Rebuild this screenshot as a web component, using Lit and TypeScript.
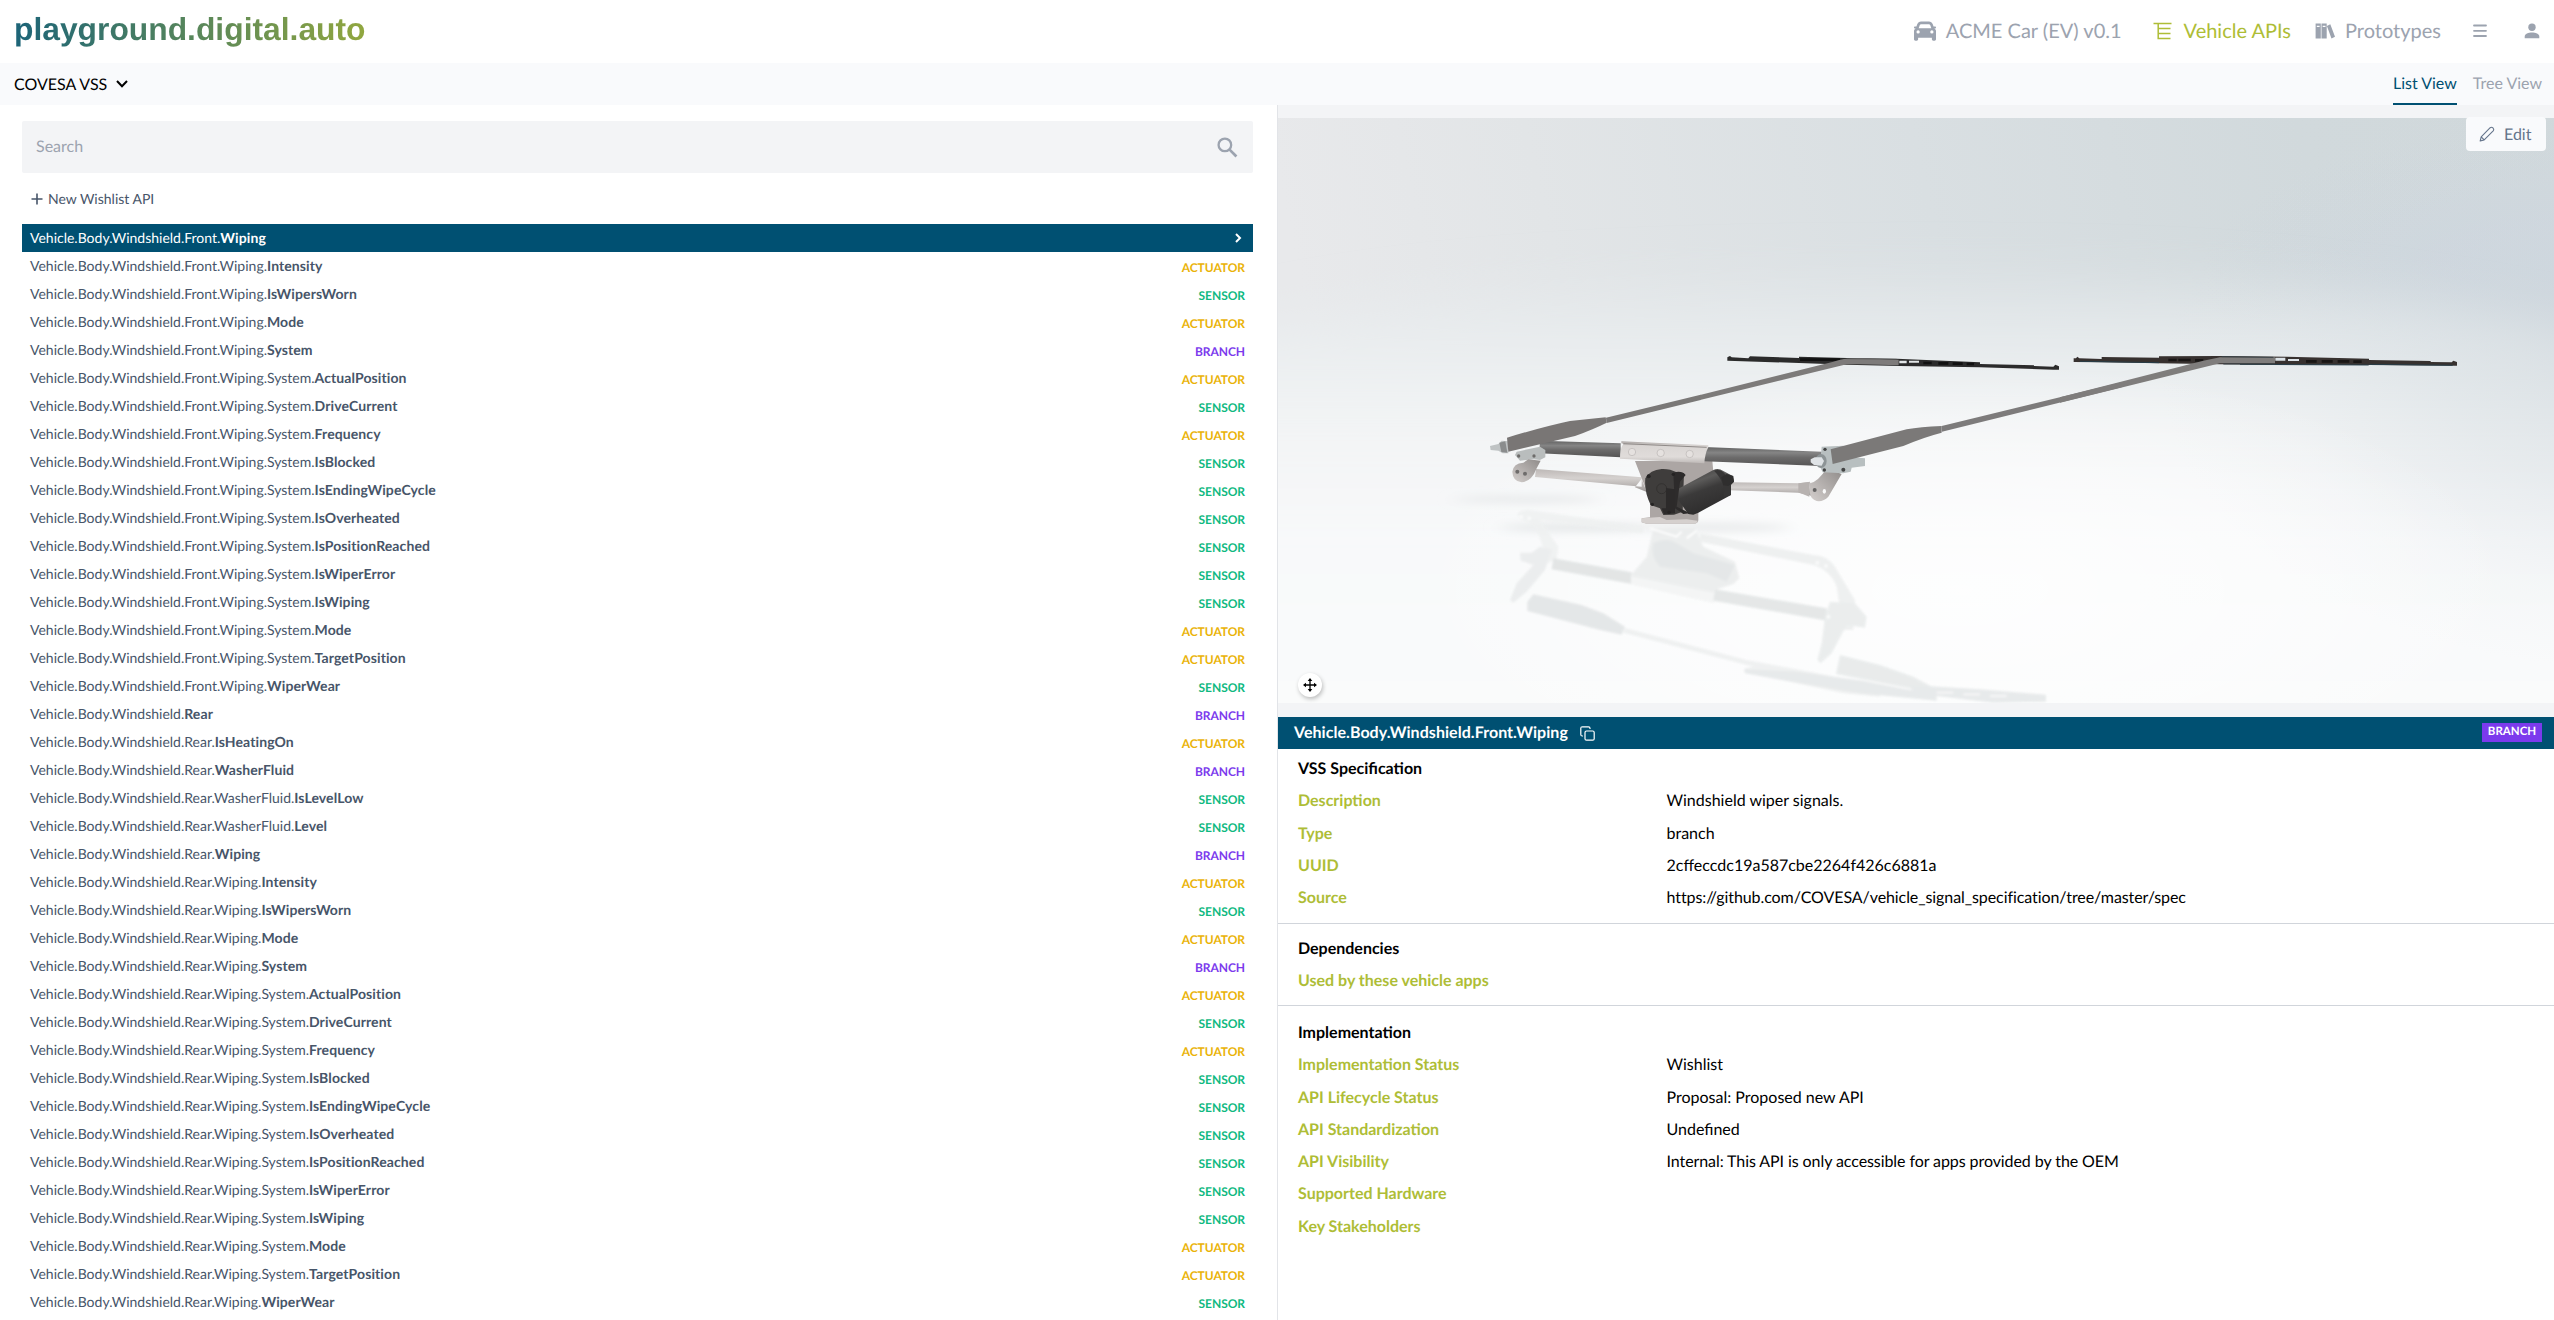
import { LitElement, html, css } from "lit";
import { customElement } from "lit/decorators.js";

type Kind = "BRANCH" | "ACTUATOR" | "SENSOR";

const F = "Vehicle.Body.Windshield.Front.Wiping.";
const R = "Vehicle.Body.Windshield.Rear.";
const A: Kind = "ACTUATOR", S: Kind = "SENSOR", B: Kind = "BRANCH";

const wiping = (p: string): [string, string, Kind][] => [
  [p, "Intensity", A], [p, "IsWipersWorn", S], [p, "Mode", A], [p, "System", B],
  [p + "System.", "ActualPosition", A], [p + "System.", "DriveCurrent", S], [p + "System.", "Frequency", A],
  [p + "System.", "IsBlocked", S], [p + "System.", "IsEndingWipeCycle", S], [p + "System.", "IsOverheated", S],
  [p + "System.", "IsPositionReached", S], [p + "System.", "IsWiperError", S], [p + "System.", "IsWiping", S],
  [p + "System.", "Mode", A], [p + "System.", "TargetPosition", A], [p, "WiperWear", S],
];

const ROWS: [string, string, Kind][] = [
  ["Vehicle.Body.Windshield.Front.", "Wiping", B],
  ...wiping(F),
  ["Vehicle.Body.Windshield.", "Rear", B],
  [R, "IsHeatingOn", A], [R, "WasherFluid", B],
  [R + "WasherFluid.", "IsLevelLow", S], [R + "WasherFluid.", "Level", S],
  [R, "Wiping", B],
  ...wiping(R + "Wiping."),
];

@customElement("wiper-scene")
export class WiperScene extends LitElement {
  static styles = css`
    :host { display: block; }
    svg { display: block; width: 100%; height: 100%; }
  `;
  render() {
    return html`<svg viewBox="1278 118 1276 585" preserveAspectRatio="none">
      <defs>
        <linearGradient id="wall" x1="0" y1="0.1" x2="1" y2="0">
          <stop offset="0" stop-color="#e8e9eb"/><stop offset=".2" stop-color="#e2e5e7"/>
          <stop offset=".5" stop-color="#d9dfe2"/><stop offset=".8" stop-color="#d1d9dc"/><stop offset="1" stop-color="#d0d8db"/>
        </linearGradient>
        <radialGradient id="blue" cx="0" cy="0" r="1" gradientUnits="userSpaceOnUse" gradientTransform="matrix(360 0 0 140 2560 270)">
          <stop offset="0" stop-color="#cbd4de" stop-opacity=".8"/><stop offset=".35" stop-color="#cbd4de" stop-opacity=".6"/><stop offset=".7" stop-color="#cbd4de" stop-opacity=".2"/><stop offset="1" stop-color="#cbd4de" stop-opacity="0"/>
        </radialGradient>
        <linearGradient id="floor" x1="0" y1="0" x2="0" y2="1">
          <stop offset="0" stop-color="#e6eaec" stop-opacity=".1"/><stop offset=".12" stop-color="#e9edef" stop-opacity=".7"/>
          <stop offset=".3" stop-color="#f2f4f5" stop-opacity=".95"/><stop offset=".55" stop-color="#f8f9fa"/><stop offset="1" stop-color="#fafbfb"/>
        </linearGradient>
        <radialGradient id="side" cx="0" cy="0" r="1" gradientUnits="userSpaceOnUse" gradientTransform="matrix(480 0 0 300 2640 370)">
          <stop offset="0" stop-color="#ced6dc" stop-opacity=".6"/><stop offset=".4" stop-color="#d2dadf" stop-opacity=".38"/><stop offset=".75" stop-color="#d5dce2" stop-opacity=".1"/><stop offset="1" stop-color="#d5dce2" stop-opacity="0"/>
        </radialGradient>
        <radialGradient id="glow" cx=".5" cy=".5" r=".5">
          <stop offset="0" stop-color="#fff" stop-opacity=".8"/><stop offset=".55" stop-color="#fff" stop-opacity=".45"/><stop offset="1" stop-color="#fff" stop-opacity="0"/>
        </radialGradient>
        <linearGradient id="tube" x1="0" y1="0" x2="0" y2="1">
          <stop offset="0" stop-color="#626262"/><stop offset=".3" stop-color="#858585"/><stop offset=".55" stop-color="#6c6b6b"/><stop offset="1" stop-color="#555454"/>
        </linearGradient>
        <linearGradient id="rod" x1="0" y1="0" x2="0" y2="1">
          <stop offset="0" stop-color="#bdb8b6"/><stop offset=".4" stop-color="#d5d1cf"/><stop offset="1" stop-color="#9d9897"/>
        </linearGradient>
        <linearGradient id="plate" x1="0" y1="0" x2="0" y2="1">
          <stop offset="0" stop-color="#aaa5a3"/><stop offset=".2" stop-color="#d9d5d3"/><stop offset=".7" stop-color="#e0dcda"/><stop offset="1" stop-color="#bdb8b6"/>
        </linearGradient>
        <linearGradient id="lug" x1="0" y1="1" x2="1" y2="0">
          <stop offset="0" stop-color="#d4cfcd"/><stop offset="1" stop-color="#8f8b89"/>
        </linearGradient>
        <linearGradient id="motor" x1="0" y1="0" x2=".45" y2="1">
          <stop offset="0" stop-color="#343333"/><stop offset=".35" stop-color="#5c5b5a"/><stop offset=".55" stop-color="#3b3a3a"/><stop offset="1" stop-color="#2d2c2c"/>
        </linearGradient>
        <filter id="b30" x="-50%" y="-50%" width="200%" height="200%"><feGaussianBlur stdDeviation="22"/></filter>
        <filter id="b8" x="-50%" y="-100%" width="200%" height="300%"><feGaussianBlur stdDeviation="26 12"/></filter>
        <filter id="b1" x="-5%" y="-5%" width="110%" height="110%"><feGaussianBlur stdDeviation="2.500"/></filter>
      </defs>
      <rect x="1278" y="118" width="1276" height="585" fill="url(#wall)"/>
      <rect x="2150" y="118" width="404" height="320" fill="url(#blue)"/>
      <path d="M1200 335C1400 275 1700 265 1950 265C2200 265 2400 285 2640 345V760H1200Z" fill="url(#floor)" filter="url(#b30)"/>
      <rect x="2150" y="118" width="404" height="585" fill="url(#side)"/>
      <ellipse cx="1960" cy="590" rx="560" ry="230" fill="url(#glow)"/>

      <g transform="translate(1460 400) scale(.333333)">
        <g filter="url(#b8)">
          <ellipse cx="200" cy="298" rx="220" ry="9" fill="#e4e7e8"/>
          <ellipse cx="360" cy="382" rx="240" ry="11" fill="#e2e5e6"/>
          <ellipse cx="760" cy="382" rx="230" ry="13" fill="#e8eaeb"/>
        </g>
        <g filter="url(#b1)" opacity=".85">
          <path d="M172 340Q190 325 225 332L550 380V400L240 360L295 440L290 480L262 490L235 400Q220 370 195 362Q175 360 172 340Z" fill="#eff1f1"/>
          <g fill="#f9fafa"><circle cx="184" cy="350" r="6"/><circle cx="208" cy="355" r="6"/></g>
          <path d="M720 400L1060 465Q1100 465 1125 500L1185 600L1180 690L1150 690L1130 560Q1110 510 1060 495L720 425Z" fill="#eceeee"/>
          <path d="M180 458H215L240 440L275 450L255 510L200 575L160 608L150 600L170 550L220 495L182 482Z" fill="#e9ebec"/>
          <path d="M280 475L515 517V552L275 508Z" fill="#dfe2e2"/>
          <path d="M580 385L705 385L730 440L825 485L838 535L820 552L765 570L760 608L513 553V525L560 470Z" fill="#eaecec"/>
          <path d="M580 430Q620 410 650 430L700 460L825 495L800 545L740 520L600 500Q570 470 580 430Z" fill="#e1e4e5"/>
          <path d="M570 385L650 410L665 395M680 415L710 392" stroke="#fff" stroke-width="6" fill="none"/>
          <path d="M513 528L765 578V608L513 553Z" fill="#f3f4f4"/>
          <path d="M765 568L1100 625V662L760 602Z" fill="#e1e4e4"/>
          <path d="M1110 605L1185 610L1220 650L1215 683L1160 675L1115 760L1082 790L1072 780L1085 730L1095 650Z" fill="#e8ebeb"/>
          <g fill="#f9fafa"><circle cx="1072" cy="488" r="6"/><circle cx="1098" cy="498" r="6"/><circle cx="1105" cy="650" r="6"/></g>
          <path d="M220 583L365 615L430 640L495 680L485 704L420 690L202 633V605Z" fill="#e1e4e5"/>
          <path d="M495 684L860 780L1050 815L1215 850L1260 862V890L1150 880L850 815L855 805L880 800L490 698Z" fill="#edefef"/>
          <path d="M855 808L1010 815L1210 842L1340 868L1430 880V902L1200 880L1020 850L855 820Z" fill="#e4e7e8"/>
          <path d="M1140 765L1260 795L1360 830L1430 868L1400 875L1128 822Z" fill="#e6e9e9"/>
          <path d="M1350 855L1560 868L1758 884V905L1600 908L1360 880Z" fill="#e4e7e8"/>
          <path d="M1430 878H1480M1510 883H1560M1590 888H1640" stroke="#f3f4f5" stroke-width="7"/>
        </g>

        <path d="M545 236L525 262L560 276ZM228 207L545 232V260L225 231Z" fill="url(#rod)"/>
        <path d="M815 247L1018 250L1050 245L1058 288L1015 278L810 271Z" fill="url(#rod)"/>
        <path d="M525 183H757L760 215L715 335V360Q715 371 700 371H560L545 367V355L570 352V300L553 255Z" fill="#aca6a4"/>
        <path d="M545 355L600 351L620 360L680 358L713 362Q712 371 700 371H560L545 367Z" fill="#d5d0ce"/>
        <path d="M240 122L482 130V172L238 160Z" fill="url(#tube)"/>
        <path d="M732 141L1085 155V198L732 184Z" fill="url(#tube)"/>
        <path d="M484 124L745 136V142Q735 160 733 190L480 176Q480 145 490 132L484 130Z" fill="url(#plate)"/>
        <path d="M490 131L740 142" stroke="#8f8a88" stroke-width="3" fill="none"/>
        <g fill="#e5e1df" stroke="#bab5b3" stroke-width="2"><circle cx="516" cy="156" r="11"/><circle cx="602" cy="159" r="11"/><circle cx="689" cy="162" r="11"/></g>
        <path d="M165 165L180 182L220 178L240 180L256 172V150L240 140L170 155Z" fill="#b9bdbd"/>
        <path d="M205 178L242 182L230 205Q215 245 185 247Q158 244 157 215Q160 190 190 188Z" fill="url(#lug)"/>
        <g fill="#6e6c6b"><circle cx="172" cy="215" r="6"/><circle cx="195" cy="221" r="6"/><circle cx="176" cy="168" r="5"/><circle cx="222" cy="168" r="5"/></g>
        <path d="M90 138L115 132L125 122L145 124V160L128 160L115 152L92 150Z" fill="#bfc3c4"/>
        <path d="M118 128L136 124L142 158L124 156Z" fill="#8a8c8d"/>
        <path d="M141 113Q250 80 330 63L437 52L440 68Q400 88 345 108L145 155Z" fill="#797675"/>
        <path d="M438 53L722 -16V0L440 69Z" fill="#7a7877"/>

        <path d="M1100 205L1145 222L1105 290Q1090 306 1070 303Q1052 298 1050 280V250Q1075 245 1100 205Z" fill="url(#lug)"/>
        <path d="M1015 250L1048 246V290L1015 277Z" fill="#b7b2b0"/>
        <circle cx="1064" cy="270" r="6" fill="#656464"/><ellipse cx="1093" cy="274" rx="5" ry="7" fill="#f8f8f8"/>
        <path d="M1085 140L1150 137L1160 170L1215 175V198L1175 203L1172 215L1150 220L1088 217L1080 200Z" fill="#b8bfc0"/>
        <g fill="#424343"><circle cx="1095" cy="148" r="5"/><circle cx="1093" cy="210" r="5"/><circle cx="1150" cy="209" r="6"/></g>
        <ellipse cx="1083" cy="183" rx="17" ry="21" fill="#8d9496"/>
        <path d="M1052 178L1064 172L1085 172L1092 183L1085 197L1062 195L1052 187Z" fill="#dfe3e6"/>
        <path d="M1112 148L1340 88Q1380 80 1445 78V98Q1390 112 1330 138L1118 192Z" fill="#7b7978"/>

        <path d="M556 235Q570 210 605 207Q630 206 650 217L672 220L668 335L642 344L610 345L600 325L572 315Q552 275 556 235Z" fill="#3f3d3c"/>
        <path d="M655 266L760 210Q775 203 790 213L818 228L822 245L813 255V285L715 338L700 344L685 342L655 300Z" fill="url(#motor)"/>
        <path d="M762 212Q782 206 795 222L813 255V285L790 292Q800 250 762 212Z" fill="#373636"/>
        <path d="M784 232L800 222L820 228L822 245L805 258L790 256Z" fill="#2f2e2e"/>
        <path d="M640 218Q665 210 677 225L660 245L650 320L690 340L670 342L645 325Z" fill="#2d2b2b"/>
        <circle cx="605" cy="266" r="15" fill="none" stroke="#333130" stroke-width="3"/>
        <path d="M618 264L645 268V340L612 342L605 325H618Z" fill="#2c2a2a"/>
        <g fill="#252323"><circle cx="566" cy="229" r="6"/><circle cx="640" cy="223" r="5"/><circle cx="577" cy="313" r="5"/><circle cx="627" cy="337" r="5"/></g>
      </g>

      <g transform="translate(1700 330) scale(.333333)">
        <path d="M82 82L90 78L95 82L145 85L150 79L297 84V80L440 84L590 86L840 97V102L1002 106V108L1060 110L1066 104L1077 109V119L1060 119L840 112L600 108L440 104L297 99L82 92Z" fill="#2b2b2b"/>
        <path d="M300 89H420M670 99H695M715 100H745M758 101H788M800 102H822" stroke="#111" stroke-width="8"/>
        <path d="M598 92H620V100H598ZM627 92H657V98H627Z" fill="#e2e6e7"/>
        <path d="M0 195L400 95Q430 84 480 85L596 89V106L480 103L440 103L0 210Z" fill="#7d7b7a"/>
        <path d="M440 86L590 88" stroke="#555" stroke-width="2"/>
        <path d="M725 288L1265 157V172L726 305Z" fill="#7d7b7b"/>
      </g>
      <g transform="translate(2060 330) scale(.333333)">
        <path d="M41 85L48 85L52 80L58 85L125 87V81L297 83V79L480 78L680 80L927 86V90L1112 93V96L1175 97L1180 92L1191 96V107L927 105L680 104L480 103L297 100L125 97L41 96Z" fill="#37312f"/>
        <path d="M60 94L297 98M540 103L926 105M928 103L1178 106" stroke="#273d48" stroke-width="3"/>
        <path d="M325 90H350M355 90H392M405 91H430M738 94H770M785 94H818M833 94H868M880 95H905" stroke="#191615" stroke-width="8"/>
        <path d="M646 83H676V92H646ZM684 87H717V93H684Z" fill="#dce3e8"/>
        <path d="M0 202L430 92L480 82H645V100H480L0 218Z" fill="#7f7d7c"/>
        <path d="M485 80L640 82M490 102L645 102" stroke="#394247" stroke-width="3"/>
      </g>
    </svg>`;
  }
}

@customElement("app-root")
export class AppRoot extends LitElement {
  static styles = css`
    :host { display: flex; flex-direction: column; height: 1320px; overflow: hidden; background: #fff; font-family: Lato, sans-serif; color: #000; font-size: 16px; box-sizing: border-box; text-rendering: geometricPrecision; }
    * { box-sizing: border-box; }
    svg { display: block; flex: none; }
    .head { height: 63px; flex: none; display: flex; align-items: center; padding: 0 14px 2px 14px; color: #9ca3af; font-size: 20px; }
    .logo { font: bold 31.800px/36px "Liberation Sans", Arial, sans-serif; background: linear-gradient(90deg, #1c6478, #91a73f); -webkit-background-clip: text; background-clip: text; color: transparent; padding-bottom: 3px; height: 39px; }
    .nav { margin-left: auto; display: flex; align-items: center; }
    .item { display: flex; align-items: center; gap: 10px; }
    .item.car { margin-right: 31px; }
    .item.api { color: #aebd36; margin-right: 24px; gap: 12px; }
    .item.proto { margin-right: 31px; }
    .menu { margin-right: 36px; }
    .sub { height: 42px; flex: none; display: flex; justify-content: space-between; background: #f9fafc; padding: 0 12px 0 14px; }
    .pick { display: flex; align-items: center; gap: 9px; }
    .tabs { display: flex; gap: 16px; color: #9ca3af; }
    .tab { display: flex; align-items: center; border-bottom: 2px solid transparent; }
    .tab.on { color: #005072; border-color: #005072; }
    .main { flex: 1; min-height: 0; display: flex; }
    .left { width: 1277px; flex: none; padding: 16px 24px 0 22px; }
    .search { height: 52px; background: #f3f4f6; border-radius: 2px; display: flex; align-items: center; justify-content: space-between; padding: 0 15px 0 14px; color: #9ca3af; }
    .search span { padding-bottom: 1px; }
    .wish { height: 51px; display: flex; align-items: center; gap: 5px; padding: 0 0 0 9px; color: #475569; font-size: 14px; }
    .wish span { padding-bottom: 1px; }
    .row { height: 28px; display: flex; align-items: center; justify-content: space-between; padding: 0 8px; color: #475569; font-size: 14px; }
    .row .path { padding-bottom: 2px; }
    .row b { font-weight: 700; letter-spacing: .1px; }
    .row.on { background: #005072; color: #fff; }
    .kind { font-size: 12px; font-weight: 700; padding-top: 2px; letter-spacing: -.05px; }
    .ACTUATOR { color: #eab308; } .SENSOR { color: #10b981; } .BRANCH { color: #7c3aed; }
    .right { flex: 1; border-left: 1px solid #e2e4e8; display: flex; flex-direction: column; }
    .stage { position: relative; height: 612px; background: #f3f4f6; padding: 13px 0 14px; flex: none; }
    .scene { height: 585px; }
    .edit { position: absolute; top: 12px; right: 8px; width: 80px; height: 34px; border-radius: 4px; background: #f9fafc; color: #64748b; display: flex; align-items: center; gap: 9px; padding-left: 13px; }
    .move { position: absolute; left: 20px; bottom: 20px; width: 24px; height: 24px; border-radius: 50%; background: #fff; box-shadow: 1px 2px 4px rgba(0,0,0,.25); display: grid; place-items: center; }
    .bar { height: 32px; flex: none; background: #005072; color: #fff; display: flex; align-items: center; padding: 0 12px 0 16px; font-weight: 700; gap: 12px; }
    .bar .name { padding-bottom: 1px; letter-spacing: .05px; }
    .tag { margin-left: auto; background: #7c3aed; font-size: 11.500px; width: 60px; height: 19px; display: grid; place-items: center; padding-bottom: 1px; position: relative; top: -1px; }
    .sec { padding: 0 20px; border-bottom: 1px solid #d1d5db; }
    .sec:last-child { border: 0; }
    .sec.a { height: 175px; padding-top: 4px; } .sec.b { height: 82px; padding-top: 9px; } .sec.c { padding-top: 11px; }
    .line { height: 32.250px; display: flex; align-items: center; padding-bottom: 1px; }
    .h { font-weight: 700; }
    .k { width: 368.500px; font-weight: 700; color: #aebd36; }
    .long { letter-spacing: -.08px; }
  `;

  private line(k: string, v = "") {
    return html`<div class="line"><div class="k">${k}</div><div class="${v.length > 50 ? "long" : ""}">${v}</div></div>`;
  }

  render() {
    return html`
      <div class="head">
        <div class="logo">playground.digital.auto</div>
        <div class="nav">
          <div class="item car"><svg width="22" height="22" viewBox="0 0 512 512" fill="currentColor"><path d="M165 32C124 32 88 58 75 96L57 150H24C11 150 0 160 0 173S11 196 24 196H41C17 206 0 229 0 256V448C0 466 14 480 32 480H64C82 480 96 466 96 448V412H416V448C416 466 430 480 448 480H480C498 480 512 466 512 448V256C512 229 495 206 471 196H488C501 196 512 186 512 173S501 150 488 150H455L437 96C424 58 388 32 347 32ZM135 117C140 105 152 96 165 96H347C360 96 372 105 377 117L403 192H109ZM96 240A38 38 0 1 1 96 316A38 38 0 1 1 96 240ZM416 240A38 38 0 1 1 416 316A38 38 0 1 1 416 240Z" fill-rule="evenodd"/></svg><span>ACME Car (EV) v0.1</span></div>
          <div class="item api"><svg width="19" height="18" viewBox="0 0 19 18" fill="none" stroke="currentColor" stroke-width="1.500"><path d="M.5 1.500H18.500M5.200 1.500V16.500H17.500M5.200 6.500H17.500M5.200 11.500H17.500"/></svg><span>Vehicle APIs</span></div>
          <div class="item proto"><svg width="20" height="20" viewBox="0 0 20 20" fill="currentColor"><path fill-rule="evenodd" d="M.6 2.500H5.800V17.500H.6ZM1.800 4.800V6H4.600V4.800ZM6.500 2.500H11.700V17.500H6.500ZM7.700 4.800V6H10.500V4.800ZM11.900 5L15.300 3.300L20 15.800L16.500 17.500Z"/></svg><span>Prototypes</span></div>
          <svg class="menu" width="16" height="16" viewBox="0 0 16 16" fill="none" stroke="currentColor" stroke-width="1.800" stroke-linecap="round"><path d="M2 2.500H14M2 7.800H14M2 13H14"/></svg>
          <svg width="16" height="16" viewBox="0 0 16 16" fill="currentColor"><circle cx="8" cy="4.300" r="3.700"/><path d="M.7 15.300V13.600C.7 10.800 4.500 9.500 8 9.500S15.300 10.800 15.300 13.600V15.300Z"/></svg>
        </div>
      </div>
      <div class="sub">
        <div class="pick">COVESA VSS <svg width="12" height="8" viewBox="0 0 12 8" fill="none" stroke="currentColor" stroke-width="2"><path d="M1 1L6 6.300L11 1"/></svg></div>
        <div class="tabs"><div class="tab on">List View</div><div class="tab">Tree View</div></div>
      </div>
      <div class="main">
        <div class="left">
          <div class="search"><span>Search</span><svg width="21" height="21" viewBox="0 0 20 20" fill="none" stroke="currentColor" stroke-width="2.200"><circle cx="7.500" cy="7.500" r="6"/><path d="M12 12L18.500 18.500" stroke-width="2.600"/></svg></div>
          <div class="wish"><svg width="12" height="12" viewBox="0 0 12 12" fill="none" stroke="currentColor" stroke-width="1.600"><path d="M6 .5V11.500M.5 6H11.500"/></svg><span>New Wishlist API</span></div>
          ${ROWS.map(([p, n, k], i) => html`<div class="row ${i ? "" : "on"}"><span class="path">${p}<b>${n}</b></span>${i
            ? html`<span class="kind ${k}">${k}</span>`
            : html`<svg width="14" height="10" viewBox="0 0 14 10" fill="none" stroke="currentColor" stroke-width="2"><path d="M5 1L9 5L5 9"/></svg>`}</div>`)}
        </div>
        <div class="right">
          <div class="stage">
            <wiper-scene class="scene"></wiper-scene>
            <div class="edit"><svg width="16" height="16" viewBox="0 0 16 16" fill="none" stroke="currentColor" stroke-width="1.100" stroke-linejoin="round"><path d="M1.200 15L2.200 10.800L11.200 1.700Q12.600 .6 14 2Q15.300 3.400 14.200 4.800L5.200 13.900ZM2.200 10.800L5.200 13.900"/></svg><span>Edit</span></div>
            <div class="move"><svg width="14" height="14" viewBox="0 0 14 14"><path d="M7 1.500V12.500M1.500 7H12.500" stroke="#000" stroke-width="1.300"/><path d="M7 0L9.300 3H4.700ZM7 14L9.300 11H4.700ZM0 7L3 4.700V9.300ZM14 7L11 4.700V9.300Z"/></svg></div>
          </div>
          <div class="bar"><span class="name">Vehicle.Body.Windshield.Front.Wiping</span>
            <svg width="15" height="15" viewBox="0 0 15 15" fill="none" stroke="currentColor" stroke-width="1.200"><rect x="5" y="5" width="9.200" height="9.200" rx="1.500"/><path d="M3 10H2.300Q.8 10 .8 8.500V2.300Q.8 .8 2.300 .8H8.500Q10 .8 10 2.300V3"/></svg>
            <span class="tag">BRANCH</span></div>
          <div class="sec a"><div class="line h">VSS Specification</div>
            ${this.line("Description", "Windshield wiper signals.")}${this.line("Type", "branch")}
            ${this.line("UUID", "2cffeccdc19a587cbe2264f426c6881a")}
            ${this.line("Source", "https://github.com/COVESA/vehicle_signal_specification/tree/master/spec")}</div>
          <div class="sec b"><div class="line h">Dependencies</div>${this.line("Used by these vehicle apps")}</div>
          <div class="sec c"><div class="line h">Implementation</div>
            ${this.line("Implementation Status", "Wishlist")}${this.line("API Lifecycle Status", "Proposal: Proposed new API")}
            ${this.line("API Standardization", "Undefined")}
            ${this.line("API Visibility", "Internal: This API is only accessible for apps provided by the OEM")}
            ${this.line("Supported Hardware")}${this.line("Key Stakeholders")}</div>
        </div>
      </div>`;
  }
}
